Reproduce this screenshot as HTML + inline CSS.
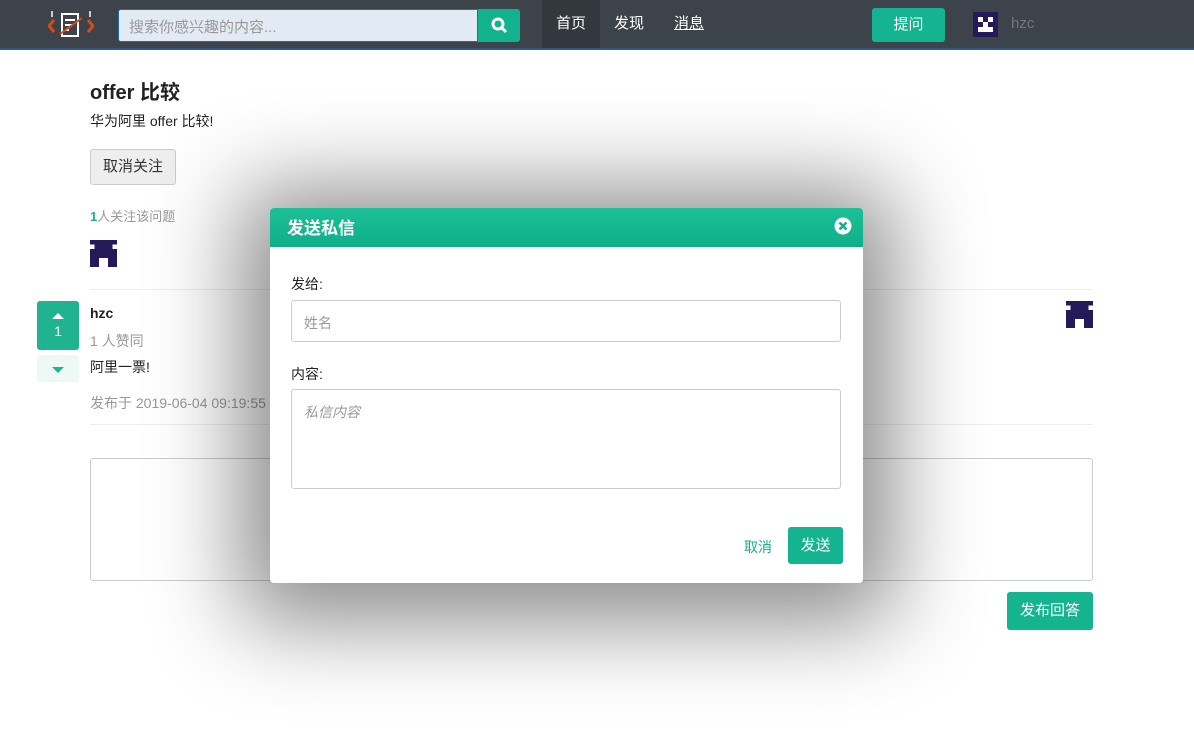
<!DOCTYPE html>
<html><head><meta charset="utf-8"><style>
*{box-sizing:border-box;margin:0;padding:0}
body{width:1194px;height:735px;overflow:hidden;background:#fff;font-family:"Liberation Sans","Noto Sans CJK SC",sans-serif;position:relative;color:#222}
.nav{position:absolute;left:0;top:0;width:1194px;height:50px;background:#3d434a;border-bottom:2px solid #2c5a80}
.search{position:absolute;left:118px;top:9px;width:360px;height:33px;background:#e2eaf3;border:1px solid #1e6fa8;border-radius:3px 0 0 3px;font-size:15px;color:#999;padding:6px 10px}
.sbtn{position:absolute;left:478px;top:9px;width:42px;height:33px;background:#13b28f;border-radius:0 3px 3px 0}
.navi{position:absolute;top:0;height:48px;line-height:48px;color:#fff;font-size:15px}
.ask{position:absolute;left:872px;top:8px;width:73px;height:34px;background:#13b48f;border-radius:3px;color:#fff;font-size:15px;text-align:center;line-height:34px}
.btn{position:absolute;background:#13b48f;color:#fff;border-radius:3px;text-align:center;font-size:15px}
.muted{color:#999}
.line{position:absolute;height:1px;background:#eee}
.overlay{position:absolute;left:270px;top:208px;width:593px;height:375px;background:#fff;border-radius:4px;box-shadow:0 10px 90px 30px rgba(0,0,0,0.45)}
.mh{height:39px;background:linear-gradient(#1cc097,#0fae8a);border-radius:4px 4px 0 0;color:#fff;font-weight:bold;font-size:17px;padding:6px 17px}
.inp{position:absolute;left:21px;width:550px;border:1px solid #ccc;border-radius:3px;font-size:14px;color:#999;padding:12px 12px}
</style></head><body>
<div class="nav">
 <svg style="position:absolute;left:48px;top:8px" width="46" height="32" viewBox="0 0 46 32"><path d="M6 12 L1 18 L6 24" stroke="#d84a1b" stroke-width="3" fill="none"/><path d="M40 12 L45 18 L40 24" stroke="#d84a1b" stroke-width="3" fill="none"/><path d="M4 3 L4 9 M42 3 L42 9" stroke="#ccc" stroke-width="2"/><rect x="14" y="6" width="16" height="22" fill="none" stroke="#fff" stroke-width="2"/><path d="M17 12h10M17 17h7M17 22h4" stroke="#fff" stroke-width="2"/><path d="M12 26 L34 10" stroke="#d84a1b" stroke-width="2"/></svg>
 <div class="search">搜索你感兴趣的内容...</div>
 <div class="sbtn"><svg width="42" height="33" viewBox="0 0 42 33"><circle cx="20" cy="15" r="5" stroke="#fff" stroke-width="3" fill="none"/><path d="M24 19 L28 23" stroke="#fff" stroke-width="3"/></svg></div>
 <div class="navi" style="left:542px;width:58px;background:#33383e;text-align:center">首页</div>
 <div class="navi" style="left:614px">发现</div>
 <div class="navi" style="left:674px;text-decoration:underline">消息</div>
 <div class="ask">提问</div>
 <svg style="position:absolute;left:973px;top:12px" width="25" height="25" viewBox="0 0 5 5"><rect width="5" height="5" fill="#241a5a"/><rect x="1" y="1" width="1" height="1" fill="#fff"/><rect x="3" y="1" width="1" height="1" fill="#fff"/><rect x="2" y="2" width="1" height="1" fill="#fff"/><rect x="1" y="3" width="3" height="1" fill="#fff"/></svg>
 <div class="navi" style="left:1011px;color:#777">hzc</div>
</div>

<div style="position:absolute;left:90px;top:76px;font-size:20px;font-weight:bold">offer 比较</div>
<div style="position:absolute;left:90px;top:111px;font-size:14px">华为阿里 offer 比较!</div>
<div style="position:absolute;left:90px;top:149px;width:86px;height:36px;background:#eee;border:1px solid #ccc;border-radius:3px;font-size:15px;line-height:34px;text-align:center;color:#333">取消关注</div>
<div style="position:absolute;left:90px;top:206px;font-size:13px" class="muted"><b style="color:#13b48f">1</b>人关注该问题</div>
<svg style="position:absolute;left:90px;top:240px" width="27" height="27" viewBox="0 0 6 6"><rect x="0" y="0" width="6" height="1" fill="#241a5a"/><rect x="1" y="1" width="1" height="1" fill="#241a5a"/><rect x="4" y="1" width="1" height="1" fill="#241a5a"/><rect x="0" y="2" width="2" height="1" fill="#241a5a"/><rect x="2" y="1" width="2" height="2" fill="#241a5a"/><rect x="4" y="2" width="2" height="1" fill="#241a5a"/><rect x="0" y="3" width="6" height="1" fill="#241a5a"/><rect x="0" y="4" width="2" height="2" fill="#241a5a"/><rect x="4" y="4" width="2" height="2" fill="#241a5a"/></svg>
<div class="line" style="left:90px;top:289px;width:1003px"></div>
<div style="position:absolute;left:37px;top:301px;width:42px;height:49px;background:#1fb390;border-radius:3px;color:#fff;text-align:center;font-size:14px"><div style="margin:12px auto 4px;width:0;height:0;border-left:6px solid transparent;border-right:6px solid transparent;border-bottom:6px solid #fff"></div>1</div>
<div style="position:absolute;left:37px;top:355px;width:42px;height:27px;background:#eef8f5;border-radius:3px"><div style="margin:12px auto;width:0;height:0;border-left:6px solid transparent;border-right:6px solid transparent;border-top:6px solid #1fb390"></div></div>
<div style="position:absolute;left:90px;top:305px;font-size:14px;font-weight:bold">hzc</div>
<div style="position:absolute;left:90px;top:331px;font-size:14px" class="muted">1 人赞同</div>
<div style="position:absolute;left:90px;top:357px;font-size:14px">阿里一票!</div>
<div style="position:absolute;left:90px;top:393px;font-size:14px" class="muted">发布于 2019-06-04 09:19:55</div>
<svg style="position:absolute;left:1066px;top:301px" width="27" height="27" viewBox="0 0 6 6"><rect x="0" y="0" width="6" height="1" fill="#241a5a"/><rect x="1" y="1" width="1" height="1" fill="#241a5a"/><rect x="4" y="1" width="1" height="1" fill="#241a5a"/><rect x="0" y="2" width="2" height="1" fill="#241a5a"/><rect x="2" y="1" width="2" height="2" fill="#241a5a"/><rect x="4" y="2" width="2" height="1" fill="#241a5a"/><rect x="0" y="3" width="6" height="1" fill="#241a5a"/><rect x="0" y="4" width="2" height="2" fill="#241a5a"/><rect x="4" y="4" width="2" height="2" fill="#241a5a"/></svg>
<div class="line" style="left:90px;top:424px;width:1003px"></div>
<div style="position:absolute;left:90px;top:458px;width:1003px;height:123px;border:1px solid #ccc;border-radius:3px"></div>
<div class="btn" style="left:1007px;top:592px;width:86px;height:38px;line-height:38px">发布回答</div>

<div class="overlay">
 <div class="mh">发送私信<svg style="position:absolute;right:11px;top:9px" width="18" height="18" viewBox="0 0 18 18"><circle cx="9" cy="9" r="8.5" fill="#fff"/><path d="M5.5 5.5L12.5 12.5M12.5 5.5L5.5 12.5" stroke="#13b08c" stroke-width="2.6"/></svg></div>
 <div style="position:absolute;left:21px;top:66px;font-size:14px">发给:</div>
 <div class="inp" style="top:92px;height:42px">姓名</div>
 <div style="position:absolute;left:21px;top:156px;font-size:14px">内容:</div>
 <div class="inp" style="top:181px;height:100px;font-style:italic">私信内容</div>
 <div style="position:absolute;left:474px;top:329px;font-size:14px;color:#13b08c">取消</div>
 <div class="btn" style="left:518px;top:319px;width:55px;height:37px;line-height:37px">发送</div>
</div>
</body></html>
